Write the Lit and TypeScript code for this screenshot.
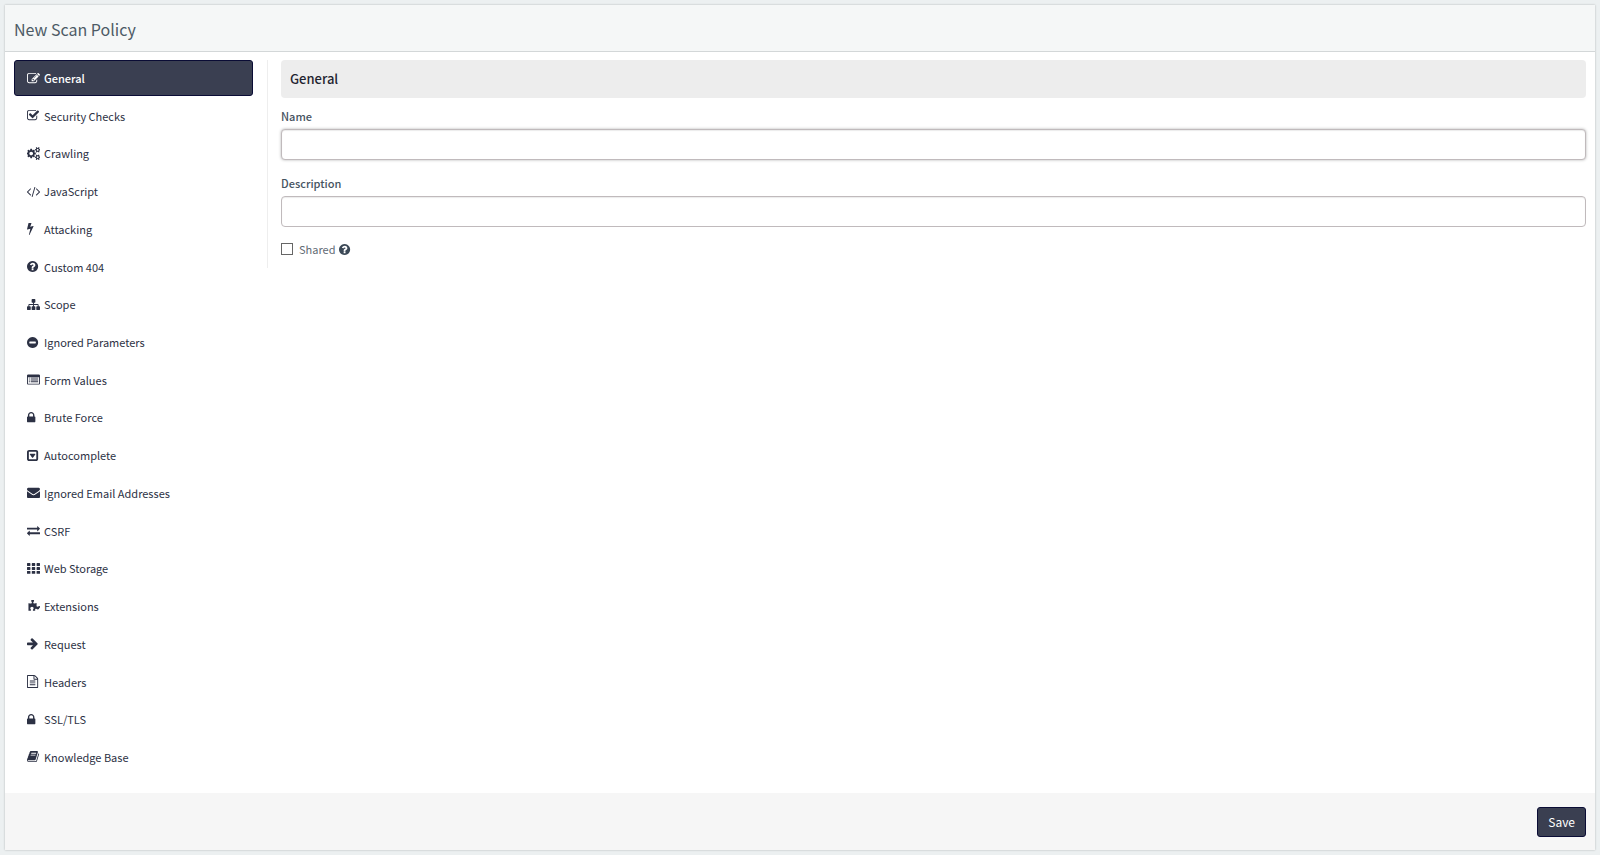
import { LitElement, html, css, svg } from "lit";
import { customElement, state } from "lit/decorators.js";
import { classMap } from "lit/directives/class-map.js";

const disc =
  "q0 209-103 385.5t-279.5 279.5-385.5 103-385.5-103-279.5-279.5-103-385.5 103-385.5 279.5-279.5 385.5-103 385.5 103 279.5 279.5 103 385.5z";

// Each glyph: left edge of its drawing and the path on a 1792-unit grid.
const glyphs: Record<string, [number, string]> = {
  edit: [0, "M888 1184l116-116-152-152-116 116v56h96v96h56zm440-720q-16-16-33 1l-350 350q-17 17-1 33t33-1l350-350q17-17 1-33zm80 594v190q0 119-84.5 203.5t-203.5 84.5h-832q-119 0-203.5-84.5t-84.5-203.5v-832q0-119 84.5-203.5t203.5-84.5h832q63 0 117 25 15 7 18 23 3 17-9 29l-49 49q-14 14-32 8-23-6-45-6h-832q-66 0-113 47t-47 113v832q0 66 47 113t113 47h832q66 0 113-47t47-113v-126q0-13 9-22l64-64q15-15 35-7t20 29zm-96-738l288 288-672 672h-288v-288zm444 132l-92 92-288-288 92-92q28-28 68-28t68 28l152 152q28 28 28 68t-28 68z"],
  check: [64, "M1472 930v318q0 119-84.5 203.5t-203.5 84.5h-832q-119 0-203.5-84.5t-84.5-203.5v-832q0-119 84.5-203.5t203.5-84.5h832q63 0 117 25 15 7 18 23 3 17-9 29l-49 49q-10 10-23 10-3 0-9-2-23-6-45-6h-832q-66 0-113 47t-47 113v832q0 66 47 113t113 47h832q66 0 113-47t47-113v-254q0-13 9-22l64-64q10-10 23-10 6 0 12 3 20 8 20 29zm231-489l-814 814q-24 24-57 24t-57-24l-430-430q-24-24-24-57t24-57l110-110q24-24 57-24t57 24l263 263 647-647q24-24 57-24t57 24l110 110q24 24 24 57t-24 57z"],
  cogs: [0, "M832 896q0-106-75-181t-181-75-181 75-75 181 75 181 181 75 181-75 75-181zm768 512q0-52-38-90t-90-38-90 38-38 90q0 53 37.5 90.5t90.5 37.5 90.5-37.5 37.5-90.5zm0-1024q0-52-38-90t-90-38-90 38-38 90q0 53 37.5 90.5t90.5 37.5 90.5-37.5 37.5-90.5zm-384 421v185q0 10-7 19.5t-16 10.5l-155 24q-11 35-32 76 34 48 90 115 7 11 7 20 0 12-7 19-23 30-82.5 89.5t-78.5 59.5q-11 0-21-7l-115-90q-37 19-77 31-11 108-23 155-7 24-30 24h-186q-11 0-20-7.5t-10-17.5l-23-153q-34-10-75-31l-118 89q-7 7-20 7-11 0-21-8-144-133-144-160 0-9 7-19 10-14 41-53t47-61q-23-44-35-82l-152-24q-10-1-17-9.5t-7-19.5v-185q0-10 7-19.5t16-10.5l155-24q11-35 32-76-34-48-90-115-7-11-7-20 0-12 7-20 22-30 82-89t79-59q11 0 21 7l115 90q34-18 77-32 11-108 23-154 7-24 30-24h186q11 0 20 7.5t10 17.5l23 153q34 10 75 31l118-89q8-7 20-7 11 0 21 8 144 133 144 160 0 8-7 19-12 16-42 54t-45 60q23 48 34 82l152 23q10 2 17 10.5t7 19.5zm640 533v140q0 16-149 31-12 27-30 52 51 113 51 138 0 4-4 7-122 71-124 71-8 0-46-47t-52-68q-20 2-30 2t-30-2q-14 21-52 68t-46 47q-2 0-124-71-4-3-4-7 0-25 51-138-18-25-30-52-149-15-149-31v-140q0-16 149-31 13-29 30-52-51-113-51-138 0-4 4-7 4-2 35-20t59-34 30-16q8 0 46 46.5t52 67.5q20-2 30-2t30 2q51-71 92-112l6-2q4 0 124 70 4 3 4 7 0 25-51 138 17 23 30 52 149 15 149 31zm0-1024v140q0 16-149 31-12 27-30 52 51 113 51 138 0 4-4 7-122 71-124 71-8 0-46-47t-52-68q-20 2-30 2t-30-2q-14 21-52 68t-46 47q-2 0-124-71-4-3-4-7 0-25 51-138-18-25-30-52-149-15-149-31v-140q0-16 149-31 13-29 30-52-51-113-51-138 0-4 4-7 4-2 35-20t59-34 30-16q8 0 46 46.5t52 67.5q20-2 30-2t30 2q51-71 92-112l6-2q4 0 124 70 4 3 4 7 0 25-51 138 17 23 30 52 149 15 149 31z"],
  code: [0, "M553 1399l-50 50q-10 10-23 10t-23-10l-466-466q-10-10-10-23t10-23l466-466q10-10 23-10t23 10l50 50q10 10 10 23t-10 23l-393 393 393 393q10 10 10 23t-10 23zm591-1067l-373 1291q-4 13-15.5 19.5t-23.5 2.5l-62-17q-13-4-19.5-15.5t-2.5-24.5l373-1291q4-13 15.5-19.5t23.5-2.5l62 17q13 4 19.5 15.5t2.5 24.5zm657 651l-466 466q-10 10-23 10t-23-10l-50-50q-10-10-10-23t10-23l393-393-393-393q-10-10-10-23t10-23l50-50q10-10 23-10t23 10l466 466q10 10 10 23t-10 23z"],
  bolt: [448, "M1333 566q18 20 7 44l-540 1157q-13 25-42 25-4 0-14-2-17-5-25.5-19t-4.5-30l197-808-406 101q-4 1-12 1-18 0-31-11-18-15-13-39l201-825q4-14 16-23t28-9h328q19 0 32 12.5t13 29.5q0 8-5 18l-171 463 396-98q8-2 12-2 19 0 34 15z"],
  question: [128, "M1024 1376v-192q0-14-9-23t-23-9h-192q-14 0-23 9t-9 23v192q0 14 9 23t23 9h192q14 0 23-9t9-23zm256-672q0-88-55.5-163t-138.5-116-170-41q-243 0-371 213-15 24 8 42l132 100q7 6 19 6 16 0 25-12 53-68 86-92 34-24 86-24 48 0 85.5 26t37.5 59q0 38-20 61t-68 45q-63 28-115.5 86.5t-52.5 125.5v36q0 14 9 23t23 9h192q14 0 23-9t9-23q0-19 21.5-49.5t54.5-49.5q32-18 49-28.5t46-35 44.5-48 28-60.5 12.5-81zm384 192" + disc],
  sitemap: [0, "M1792 1248v320q0 40-28 68t-68 28h-320q-40 0-68-28t-28-68v-320q0-40 28-68t68-28h96v-192h-512v192h96q40 0 68 28t28 68v320q0 40-28 68t-68 28h-320q-40 0-68-28t-28-68v-320q0-40 28-68t68-28h96v-192h-512v192h96q40 0 68 28t28 68v320q0 40-28 68t-68 28h-320q-40 0-68-28t-28-68v-320q0-40 28-68t68-28h96v-192q0-52 38-90t90-38h512v-192h-96q-40 0-68-28t-28-68v-320q0-40 28-68t68-28h320q40 0 68 28t28 68v320q0 40-28 68t-68 28h-96v192h512q52 0 90 38t38 90v192h96q40 0 68 28t28 68z"],
  minus: [128, "M1344 960v-128q0-26-19-45t-45-19h-768q-26 0-45 19t-19 45v128q0 26 19 45t45 19h768q26 0 45-19t19-45zm320-64" + disc],
  list: [0, "M160 192h1472q66 0 113 47t47 113v1088q0 66-47 113t-113 47h-1472q-66 0-113-47t-47-113v-1088q0-66 47-113t113-47zM128 576v864q0 32 32 32h1472q32 0 32-32v-864zM256 640h128v128h-128zM512 640h1024v128h-1024zM256 896h128v128h-128zM512 896h1024v128h-1024zM256 1152h128v128h-128zM512 1152h1024v128h-1024z"],
  lock: [320, "M640 768h512v-192q0-106-75-181t-181-75-181 75-75 181v192zm832 96v576q0 40-28 68t-68 28h-960q-40 0-68-28t-28-68v-576q0-40 28-68t68-28h32v-192q0-184 132-316t316-132 316 132 132 316v192h32q40 0 68 28t28 68z"],
  caret: [128, "M1273 675q18 35-5 66l-320 448q-19 27-52 27t-52-27l-320-448q-23-31-5-66 17-35 57-35h640q40 0 57 35zm135 701v-960q0-13-9.5-22.5t-22.5-9.5h-960q-13 0-22.5 9.5t-9.5 22.5v960q0 13 9.5 22.5t22.5 9.5h960q13 0 22.5-9.5t9.5-22.5zm256-960v960q0 119-84.5 203.5t-203.5 84.5h-960q-119 0-203.5-84.5t-84.5-203.5v-960q0-119 84.5-203.5t203.5-84.5h960q119 0 203.5 84.5t84.5 203.5z"],
  envelope: [0, "M1792 710v794q0 66-47 113t-113 47h-1472q-66 0-113-47t-47-113v-794q44 49 101 87 362 246 497 345 57 42 92.5 65.5t94.5 48 110 24.5h2q51 0 110-24.5t94.5-48 92.5-65.5q170-123 498-345 57-39 100-87zm0-294q0 79-49 151t-122 123q-376 261-468 325-10 7-42.5 31t-54 38.5-52 32.5-57.5 27-50 9h-2q-23 0-50-9t-57.5-27-52-32.5-54-38.5-42.5-31q-91-64-262-182.5t-205-142.5q-62-42-117-115.5t-55-136.5q0-78 41.5-130t118.5-52h1472q65 0 112.5 47t47.5 113z"],
  exchange: [0, "M1792 1184v192q0 13-9.5 22.5t-22.5 9.5h-1376v192q0 13-9.5 22.5t-22.5 9.5q-12 0-24-10l-319-320q-9-9-9-22 0-14 9-23l320-320q9-9 23-9 13 0 22.5 9.5t9.5 22.5v192h1376q13 0 22.5 9.5t9.5 22.5zm0-544q0 14-9 23l-320 320q-9 9-23 9-13 0-22.5-9.5t-9.5-22.5v-192h-1376q-13 0-22.5-9.5t-9.5-22.5v-192q0-13 9.5-22.5t22.5-9.5h1376v-192q0-14 9-23t23-9q12 0 24 10l319 319q9 9 9 23z"],
  grid: [0, [150, 690, 1230].map((y) => [0, 660, 1320].map((x) => `M${x + 60} ${y}h352q60 0 60 60v280q0 60-60 60h-352q-60 0-60-60v-280q0-60 60-60z`).join("")).join("")],
  puzzle: [64, "M1755 1083q0 95-55.5 158.5t-149.5 63.5q-43 0-81-17.5t-65.5-37.5-60-37.5-69.5-17.5q-89 0-89 99 0 28 12 82t11 81v5q-15 0-23 1-24 2-68.5 8.5t-81 10-66.5 3.5q-41 0-70.5-19t-29.5-57q0-38 17.5-70.5t37.5-60 37.5-65.5 17.5-81q0-91-64-146.5t-159-55.5q-98 0-167.5 54.5t-69.5 149.5q0 50 17.5 91.5t38.5 63.5 38.5 44.5 17.5 42.5q0 45-43 86-35 33-93 33-69 0-179-16-7-1-20.5-2.5t-20.5-2.5l-10-2q-2 0-2-1v-1024q2 1 17.5 3.5t34 5 21.5 3.5q150 24 245 24 80 0 117-35 46-44 46-89 0-22-15-50.5t-33.5-53-33.5-64.5-15-83q0-82 59-127.5t144-45.5q80 0 134 44.5t54 123.5q0 41-17.5 77.5t-38 59-38 56.5-17.5 71q0 57 42 83.5t103 26.5q64 0 180-15t163-17v2q-1 2-3.5 17.5t-5 34-3.5 21.5q-24 150-24 245 0 80 35 117 44 46 89 46 22 0 50.5-15t53-33.5 64.5-33.5 83-15q82 0 127.5 59t45.5 143z"],
  arrow: [128, "M1600 960q0 54-37 91l-651 651q-39 37-91 37-51 0-90-37l-75-75q-38-38-38-91t38-91l293-293h-704q-52 0-84.5-37.5t-32.5-90.5v-128q0-53 32.5-90.5t84.5-37.5h704l-293-294q-38-36-38-90t38-90l75-75q38-38 90-38 53 0 91 38l651 651q37 35 37 90z"],
  file: [128, "M1596 380q28 28 48 76t20 88v1152q0 40-28 68t-68 28h-1344q-40 0-68-28t-28-68v-1600q0-40 28-68t68-28h896q40 0 88 20t76 48zm-444-244v376h376q-10-29-22-41l-313-313q-12-12-41-22zm384 1528v-1024h-416q-40 0-68-28t-28-68v-416h-768v1536h1280zm-1024-864q0-14 9-23t23-9h704q14 0 23 9t9 23v64q0 14-9 23t-23 9h-704q-14 0-23-9t-9-23v-64zm736 224q14 0 23 9t9 23v64q0 14-9 23t-23 9h-704q-14 0-23-9t-9-23v-64q0-14 9-23t23-9h704zm0 256q14 0 23 9t9 23v64q0 14-9 23t-23 9h-704q-14 0-23-9t-9-23v-64q0-14 9-23t23-9h704z"],
  book: [64, "M1703 478q40 57 18 129l-275 906q-19 64-76.5 107.5t-122.5 43.5h-923q-77 0-148.5-53.5t-99.5-131.5q-24-67-2-127 0-4 3-27t4-37q1-8-3-21.5t-3-19.5q2-11 8-21t16.5-23.5 16.5-23.5q23-38 45-91.5t30-91.5q3-10 .5-30t-.5-28q3-11 17-28t17-23q21-36 42-92t25-90q1-9-2.5-32t.5-28q4-13 22-30.5t22-22.5q19-26 42.5-84.5t27.5-96.5q1-8-3-25.5t-2-26.5q2-8 9-18t18-23 17-21q8-12 16.5-30.5t15-35 16-36 19.5-32 26.5-23.5 36-11.5 47.5 5.5l-1 3q38-9 51-9h761q74 0 114 56t18 130l-274 906q-36 119-71.5 153.5t-128.5 34.5h-869q-27 0-38 15-11 16-1 43 24 70 144 70h923q29 0 56-15.5t35-41.5l300-987q7-22 5-57 38 15 59 43zm-1064 2q-4 13 2 22.5t20 9.5h608q13 0 25.5-9.5t16.5-22.5l21-64q4-13-2-22.5t-20-9.5h-608q-13 0-25.5 9.5t-16.5 22.5zm-83 256q-4 13 2 22.5t20 9.5h608q13 0 25.5-9.5t16.5-22.5l21-64q4-13-2-22.5t-20-9.5h-608q-13 0-25.5 9.5t-16.5 22.5z"],
};

const icon = (name: string) => {
  const [left, d] = glyphs[name];
  return html`<svg class="icon" viewBox="${left} 0 1792 1792" aria-hidden="true">
    ${svg`<path fill-rule="evenodd" d=${d}></path>`}
  </svg>`;
};

const sections: [string, string][] = [
  ["edit", "General"],
  ["check", "Security Checks"],
  ["cogs", "Crawling"],
  ["code", "JavaScript"],
  ["bolt", "Attacking"],
  ["question", "Custom 404"],
  ["sitemap", "Scope"],
  ["minus", "Ignored Parameters"],
  ["list", "Form Values"],
  ["lock", "Brute Force"],
  ["caret", "Autocomplete"],
  ["envelope", "Ignored Email Addresses"],
  ["exchange", "CSRF"],
  ["grid", "Web Storage"],
  ["puzzle", "Extensions"],
  ["arrow", "Request"],
  ["file", "Headers"],
  ["lock", "SSL/TLS"],
  ["book", "Knowledge Base"],
];

@customElement("app-root")
export class AppRoot extends LitElement {
  @state() private active = "General";

  static styles = css`
    :host {
      display: flex;
      box-sizing: border-box;
      min-height: 100vh;
      padding: 5px;
      background: #ecf0f1;
      color: #34495e;
      font-family: "Source Sans Pro", "Noto Sans CJK SC", sans-serif;
      font-size: 11px;
      line-height: 18px;
    }
    * {
      box-sizing: border-box;
    }
    .panel {
      flex: 1;
      display: flex;
      flex-direction: column;
      background: #fff;
      box-shadow: 0 0 2px rgba(0, 0, 0, 0.25);
    }
    .header {
      padding: 12px 9px 10px;
      background: #f5f7f7;
      border-bottom: 1px solid #d3d7d8;
    }
    .title {
      margin: 0;
      font-size: 16px;
      line-height: 24px;
      font-weight: 400;
      color: #4d5b66;
    }
    .body {
      flex: 1;
      display: flex;
      gap: 14px;
      padding: 8px 9px 18px;
    }
    .nav {
      width: 239px;
      display: flex;
      flex-direction: column;
      justify-content: space-between;
    }
    .item {
      display: flex;
      align-items: center;
      gap: 4px;
      height: 36px;
      padding: 0 12px;
      border: 1px solid transparent;
      border-radius: 3px;
      color: #2c3144;
      text-decoration: none;
    }
    .item.active {
      background: #3a3f51;
      border-color: #0a0c35;
      color: #fff;
      font-weight: 500;
    }
    .icon {
      width: 13px;
      height: 13px;
      flex: none;
      fill: currentColor;
    }
    .content {
      flex: 1;
      align-self: flex-start;
      padding: 0 0 11px 13px;
      border-left: 1px solid #eee;
    }
    .heading {
      margin: 0 0 9px;
      padding: 10px 9px;
      background: #ededed;
      border-radius: 4px;
      color: #1f2430;
      font-size: 13px;
      line-height: 18px;
      font-weight: 500;
    }
    .label {
      display: block;
      margin-bottom: 4px;
      font-weight: 500;
      color: #46535f;
    }
    .input {
      display: block;
      width: 100%;
      height: 31px;
      margin-bottom: 14px;
      padding: 4px 8px;
      border: 1px solid #c0babc;
      border-radius: 4px;
      background: #fff;
      font: inherit;
      color: inherit;
      outline: none;
      box-shadow: inset 0 1px 1px rgba(0, 0, 0, 0.08);
    }
    .input.current {
      box-shadow: 0 0 3px rgba(0, 0, 0, 0.3), inset 0 1px 1px rgba(0, 0, 0, 0.08);
    }
    .shared {
      display: flex;
      align-items: center;
      line-height: 16px;
      color: #626b75;
    }
    .box {
      appearance: none;
      width: 12px;
      height: 12px;
      margin: 0 6px 0 0;
      border: 1px solid #666;
      background: #fff;
    }
    .box:checked {
      background: #3a3f51;
    }
    .help {
      display: flex;
      margin-left: 3px;
      padding: 0;
      border: 0;
      background: none;
      color: #3b4856;
    }
    .footer {
      display: flex;
      justify-content: flex-end;
      padding: 14px 9px 13px;
      background: #f6f6f6;
    }
    .save {
      height: 30px;
      padding: 0 10px;
      border: 1px solid #0a0c35;
      border-radius: 3px;
      background: #3a3f51;
      color: #fff;
      font: inherit;
      font-size: 12px;
    }
  `;

  render() {
    return html`
      <main class="panel">
        <header class="header"><h1 class="title">New Scan Policy</h1></header>
        <div class="body">
          <nav class="nav" aria-label="Policy sections">
            ${sections.map(
              ([glyph, name]) => html`<a
                class=${classMap({ item: true, active: name === this.active })}
                href="#${name.toLowerCase().replace(/\W+/g, "-")}"
                @click=${() => (this.active = name)}
                >${icon(glyph)}<span>${name}</span></a
              >`
            )}
          </nav>
          <section class="content">
            <h2 class="heading">General</h2>
            <label class="label" for="name">Name</label>
            <input class="input current" id="name" type="text" />
            <label class="label" for="description">Description</label>
            <input class="input" id="description" type="text" />
            <div class="shared">
              <input class="box" id="shared" type="checkbox" />
              <label for="shared">Shared</label>
              <button class="help" type="button" aria-label="Help">${icon("question")}</button>
            </div>
          </section>
        </div>
        <footer class="footer"><button class="save" type="button">Save</button></footer>
      </main>
    `;
  }
}
